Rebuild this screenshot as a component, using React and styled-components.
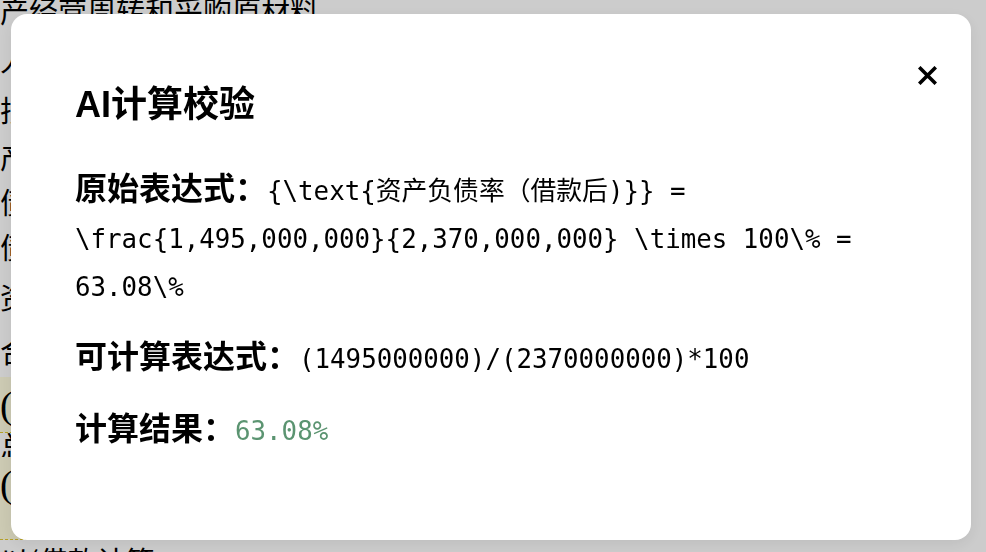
import React from "react";
import styled, { createGlobalStyle } from "styled-components";

const Global = createGlobalStyle`
  html, body { margin: 0; padding: 0; background: #fff; overflow: hidden; }
  body { font-family: "Noto Sans CJK SC", "Noto Sans", sans-serif; color: #000; }
`;

const Page = styled.div`
  width: 986px;
  height: 552px;
  overflow: hidden;
`;

const Doc = styled.div`
  margin-top: -14px;
  display: flex;
  flex-direction: column;
`;

const BgRow = styled.div`
  height: ${(p) => p.$h}px;
  width: ${(p) => (p.$hl ? "620px" : "auto")};
  background: ${(p) => (p.$hl ? "#fffde0" : "transparent")};
  border-bottom: ${(p) => (p.$hl ? "1px dashed #e2c832" : "none")};
  box-sizing: border-box;
  display: flex;
  align-items: ${(p) => (p.$top ? "flex-start" : "center")};
  padding-top: ${(p) => (p.$top ? "8px" : "0")};
  line-height: 1;
  white-space: nowrap;
  font-family: ${(p) => (p.$serif ? '"Liberation Serif", "Noto Sans CJK SC", serif' : '"Noto Sans CJK SC", sans-serif')};
  font-size: ${(p) => (p.$serif ? "38px" : "29px")};
`;

const Overlay = styled.div`
  position: fixed;
  inset: 0;
  background: rgba(0, 0, 0, 0.2);
  display: flex;
  align-items: flex-start;
  justify-content: flex-start;
  padding: 14px 15px 12px 11px;
  box-sizing: border-box;
`;

const Modal = styled.div`
  position: relative;
  width: 960px;
  height: 526px;
  background: #fff;
  border-radius: 16px;
  box-sizing: border-box;
  padding: 64px 64px 40px 64px;
  display: flex;
  flex-direction: column;
  box-shadow: 0 4px 16px rgba(0, 0, 0, 0.08);
`;

const Close = styled.button`
  position: absolute;
  top: 51px;
  right: 33px;
  width: 21px;
  height: 21px;
  padding: 0;
  border: none;
  background: transparent;
  display: flex;
  align-items: center;
  justify-content: center;
  cursor: pointer;
`;

const Title = styled.h2`
  margin: 0 0 30px 0;
  font-family: "Liberation Sans", "Noto Sans CJK SC", sans-serif;
  font-size: 36px;
  font-weight: 700;
  line-height: 54px;
  color: #000;
`;

const Para = styled.p`
  margin: 0 0 24px 0;
  font-size: 32px;
  line-height: 48px;
  color: #000;
`;

const Label = styled.span`
  font-weight: 700;
  font-family: "Noto Sans CJK SC", sans-serif;
  line-height: 1;
`;

const Code = styled.code`
  font-family: "DejaVu Sans Mono", "Noto Sans CJK SC", monospace;
  font-size: 25.8px;
  line-height: 1;
  color: ${(p) => p.$color || "#000"};
`;

export default function App() {
  return (
    <Page>
      <Global />
      <Doc>
        <BgRow $h={48}>产经营周转和采购原材料，</BgRow>
        <BgRow $h={50}>人</BgRow>
        <BgRow $h={50}>抵押</BgRow>
        <BgRow $h={44}>产</BgRow>
        <BgRow $h={46}>债</BgRow>
        <BgRow $h={44}>债</BgRow>
        <BgRow $h={56}>资</BgRow>
        <BgRow $h={53}>合</BgRow>
        <BgRow $h={56} $hl $serif>(</BgRow>
        <BgRow $h={24}>总</BgRow>
        <BgRow $h={83} $hl $serif $top>(</BgRow>
        <BgRow $h={40}>以(借款计算</BgRow>
      </Doc>
      <Overlay>
        <Modal>
          <Close aria-label="关闭">
            <svg width="19" height="19" viewBox="0 0 19 19">
              <path d="M2.5 2.5 L16.5 16.5 M16.5 2.5 L2.5 16.5" stroke="#000" strokeWidth="3.6" strokeLinecap="square" />
            </svg>
          </Close>
          <Title>AI计算校验</Title>
          <Para>
            <Label>原始表达式：</Label>
            <Code>{"{\\text{资产负债率（借款后)}} = \\frac{1,495,000,000}{2,370,000,000} \\times 100\\% = 63.08\\%"}</Code>
          </Para>
          <Para>
            <Label>可计算表达式：</Label>
            <Code>(1495000000)/(2370000000)*100</Code>
          </Para>
          <Para>
            <Label>计算结果：</Label>
            <Code $color="#5b9471">63.08%</Code>
          </Para>
        </Modal>
      </Overlay>
    </Page>
  );
}
